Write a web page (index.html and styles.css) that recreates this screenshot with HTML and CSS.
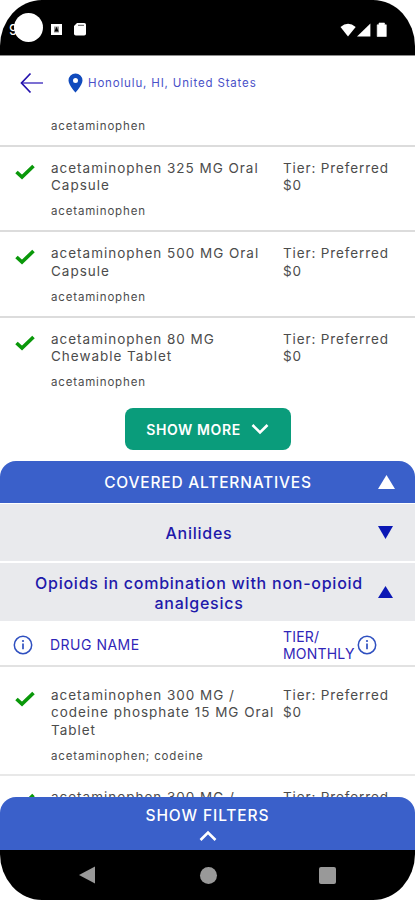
FILE: index.html
```html
<!DOCTYPE html>
<html lang="en">
<head>
<meta charset="utf-8">
<title>Covered drugs</title>
<link rel="stylesheet" href="styles.css">
</head>
<body>
<svg class="defs" width="0" height="0">
  <symbol id="check" viewBox="0 0 20 16"><path d="M1.500 8L7 13.100L18.500 2" fill="none" stroke="#0a980a" stroke-width="3.600"/></symbol>
  <symbol id="info" viewBox="0 0 20 20"><circle cx="10" cy="10" r="8.700" fill="none" stroke="#2f50c0" stroke-width="1.500"/><path d="M10 8.600V14.200" fill="none" stroke="#2f50c0" stroke-width="1.700"/><circle cx="10" cy="6" r="1.100" fill="#2f50c0"/></symbol>
</svg>
<div class="phone">
  <div class="status">
    <span class="clock">9</span><span class="camera"></span>
    <svg class="status-left" width="40" height="20" viewBox="0 0 40 20"><path d="M1 4H12V15H1Z" fill="#fff"/><path d="M4 6.500H9V12.500H4Z" fill="#999"/><path d="M4.400 11.500L6.500 6.700L8.600 11.500Z" fill="#000"/><path d="M27 3H34.200Q36 3 36 4.800V13.800Q36 15.500 34.200 15.500H25.800Q24 15.500 24 13.800V6Z" fill="#fff"/><path d="M28 5.400H34" stroke="#777" stroke-width="1.300"/></svg>
    <svg class="status-right" width="50" height="20" viewBox="0 0 50 20"><path d="M0.500 6Q8-.5 15.700 6L8 15.400Z" fill="#fff"/><path d="M17 15.500L30.400 2.500V15.500Z" fill="#fff"/><path d="M37.200 3.800H39V2H44.500V3.800H46.300V15.500H37.200Z" fill="#fff" stroke="#fff" stroke-width=".6" stroke-linejoin="round"/></svg>
  </div>
  <header class="top">
    <svg class="back" width="24" height="22" viewBox="0 0 24 22"><path d="M23 11H2" fill="none" stroke="#5140c4" stroke-width="1.500"/><path d="M10.500 1.500L1.500 11L10.500 20.500" fill="none" stroke="#2411ad" stroke-width="1.700"/></svg>
    <svg class="pin" width="16" height="20" viewBox="0 0 16 20"><path fill-rule="evenodd" d="M7.500 0.500A7 7 0 0 0 .500 7.500C.5 12 7.500 19.500 7.500 19.500S14.500 12 14.500 7.500A7 7 0 0 0 7.500.500ZM7.500 4.900A2.500 2.500 0 1 1 7.500 9.900A2.500 2.500 0 0 1 7.500 4.900Z" fill="#114bbd"/></svg>
    <span class="place">Honolulu, HI, United States</span>
  </header>
  <main class="content">
    <section class="list">
      <div class="row partial"><p class="sub">acetaminophen</p></div>
      <div class="row"><svg class="check"><use href="#check"/></svg><div class="drug"><p class="name">acetaminophen 325 MG Oral<br>Capsule</p><p class="sub">acetaminophen</p></div><p class="tier">Tier: Preferred<br>$0</p></div>
      <div class="row"><svg class="check"><use href="#check"/></svg><div class="drug"><p class="name">acetaminophen 500 MG Oral<br>Capsule</p><p class="sub">acetaminophen</p></div><p class="tier">Tier: Preferred<br>$0</p></div>
      <div class="row last"><svg class="check"><use href="#check"/></svg><div class="drug"><p class="name">acetaminophen 80 MG<br>Chewable Tablet</p><p class="sub">acetaminophen</p></div><p class="tier">Tier: Preferred<br>$0</p></div>
    </section>
    <button class="more"><span>SHOW MORE</span><svg width="18" height="12" viewBox="0 0 18 12"><path d="M1.500 2L9 9.500L16.500 2" fill="none" stroke="#fff" stroke-width="2.600"/></svg></button>
    <section class="alternatives">
      <div class="section-title"><h2>COVERED ALTERNATIVES</h2><svg class="tri" width="17" height="14" viewBox="0 0 17 14"><path d="M8.500 0L17 14H0Z" fill="#fff"/></svg></div>
      <div class="group"><span class="group-name">Anilides</span><svg class="tri" width="15" height="13" viewBox="0 0 15 13"><path d="M0 0H15L7.500 13Z" fill="#0b18b5"/></svg></div>
      <div class="group open"><span class="group-name">Opioids in combination with non-opioid<br>analgesics</span><svg class="tri" width="15" height="12" viewBox="0 0 15 12"><path d="M0 12H15L7.500 0Z" fill="#0b18b5"/></svg></div>
      <div class="heads"><svg class="info"><use href="#info"/></svg><span class="head-name">DRUG NAME</span><span class="head-tier">TIER/<br>MONTHLY</span><svg class="info"><use href="#info"/></svg></div>
      <div class="row alt"><svg class="check"><use href="#check"/></svg><div class="drug"><p class="name">acetaminophen 300 MG /<br>codeine phosphate 15 MG Oral<br>Tablet</p><p class="sub">acetaminophen; codeine</p></div><p class="tier">Tier: Preferred<br>$0</p></div>
      <div class="row next"><svg class="check"><use href="#check"/></svg><div class="drug"><p class="name">acetaminophen 300 MG /</p></div><p class="tier">Tier: Preferred</p></div>
    </section>
  </main>
  <footer class="bottom">
    <div class="filters"><span>SHOW FILTERS</span><svg width="18" height="12" viewBox="0 0 18 12"><path d="M1.500 10L9 2.500L16.500 10" fill="none" stroke="#fff" stroke-width="2.600"/></svg></div>
    <nav class="nav"><svg width="17" height="18" viewBox="0 0 17 18"><path d="M0 9L16 .500V17.500Z" fill="#999"/></svg><span class="home"></span><span class="recent"></span></nav>
  </footer>
</div>
</body>
</html>
```
FILE: styles.css
```css
* { box-sizing: border-box; }
body { margin: 0; background: #fff; font-family: Inter, "Liberation Sans", sans-serif; }
p, h2 { margin: 0; }
.defs { position: absolute; }
.phone { width: 415px; height: 900px; overflow: hidden; border-radius: 42px / 46px; display: flex; flex-direction: column; background: #fff; }
.status { position: relative; flex: none; height: 56px; background: #000; border-bottom: 1px solid #8c8c8c; display: flex; }
.clock { position: absolute; left: 9px; top: 21px; color: #fff; font-size: 14px; line-height: 18px; }
.camera { position: absolute; left: 14px; top: 13px; width: 29px; height: 29px; border-radius: 50%; background: #fff; }
.status-left { margin: 20px 0 0 50px; }
.status-right { margin: 21px 25px 0 auto; }
.top { flex: none; height: 54px; display: flex; align-items: center; padding-left: 20px; }
.back { margin-right: 24px; }
.pin { margin-right: 4px; }
.place { font-size: 11.500px; color: #4950c8; letter-spacing: .84px; white-space: nowrap; }
.content { flex: 1; min-height: 0; overflow: hidden; display: flex; flex-direction: column; }
.row { display: flex; height: 85.300px; flex: none; border-bottom: 2px solid #dcdcdc; padding: 13px 0 0 15px; color: #4c4c4c; }
.row.partial { height: 37px; padding: 8px 0 0 51px; }
.row.last { border: 0; height: 90.400px; }
.row.alt { height: 109px; padding-top: 20px; border-color: #e8e8e8; }
.row.next { border: 0; height: 60px; padding-top: 13px; }
.check { flex: none; width: 20px; height: 16px; margin: 4px 16px 0 0; }
.drug { width: 232px; flex: none; }
.name, .tier { font-size: 13.500px; line-height: 17.400px; letter-spacing: .98px; white-space: nowrap; }
.tier { letter-spacing: .87px; }
.sub { font-size: 11.500px; line-height: 16px; letter-spacing: .84px; }
.name + .sub { margin-top: 8.600px; }
.more { align-self: center; flex: none; width: 166px; height: 42px; border: 0; border-radius: 8px; background: #0a9c7b; color: #fff; font: 600 14px Inter, sans-serif; letter-spacing: .6px; display: flex; align-items: center; justify-content: center; gap: 10px; padding-top: 2px; }
.alternatives { margin-top: 11px; }
.section-title { height: 42px; border-radius: 16px 16px 0 0; background: #3a60ca; color: #fff; display: flex; align-items: center; justify-content: flex-end; padding-right: 20px; }
h2 { flex: 1; padding: 2px 0 0 38px; text-align: center; font-size: 15.500px; font-weight: 500; letter-spacing: .8px; }
.group { height: 60px; border-bottom: 2px solid #fff; border-top: 1px solid #fff; background: #e9eaed; display: flex; align-items: center; padding-right: 22px; color: #2119aa; }
.group.open { height: 58px; border: 0; }
.group-name { flex: 1; text-align: center; padding: 2px 0 0 20px; font-size: 16px; line-height: 20px; font-weight: 500; letter-spacing: .75px; white-space: nowrap; }
.heads { height: 46px; border-bottom: 2px solid #e2e2e2; display: flex; align-items: center; padding: 4px 0 0 13px; color: #3026b8; font-size: 14px; line-height: 17px; letter-spacing: .5px; }
.info { flex: none; width: 20px; height: 20px; }
.head-name { width: 233px; padding-left: 17px; }
.head-tier { width: 74px; margin-left: 17px; letter-spacing: .2px; }
.bottom { flex: none; }
.filters { height: 53px; border-radius: 16px 16px 0 0; background: #3a60ca; color: #fff; display: flex; flex-direction: column; align-items: center; padding-top: 9px; font-size: 15.500px; line-height: 20px; font-weight: 500; letter-spacing: .9px; gap: 4px; }
.nav { height: 50px; background: #000; display: flex; align-items: center; padding-left: 79px; }
.home { width: 17px; height: 17px; border-radius: 50%; background: #999; margin-left: 104px; }
.recent { width: 17px; height: 17px; border-radius: 2px; background: #999; margin-left: 102px; }
```
